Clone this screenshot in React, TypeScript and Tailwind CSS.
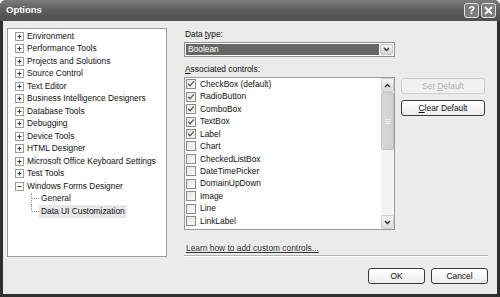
import React from "react";

const treeItems = [
  "Environment",
  "Performance Tools",
  "Projects and Solutions",
  "Source Control",
  "Text Editor",
  "Business Intelligence Designers",
  "Database Tools",
  "Debugging",
  "Device Tools",
  "HTML Designer",
  "Microsoft Office Keyboard Settings",
  "Test Tools",
];

const controls: [string, boolean][] = [
  ["CheckBox (default)", true],
  ["RadioButton", true],
  ["ComboBox", true],
  ["TextBox", true],
  ["Label", true],
  ["Chart", false],
  ["CheckedListBox", false],
  ["DateTimePicker", false],
  ["DomainUpDown", false],
  ["Image", false],
  ["Line", false],
  ["LinkLabel", false],
];

// Expand / collapse box
const ToggleBox = ({ open }: { open?: boolean }) => (
  <svg width="9" height="9" viewBox="0 0 9 9" className="shrink-0">
    <rect x="0.5" y="0.5" width="8" height="8" fill="#fff" stroke="#9c9c9c" />
    <path d="M2.5 4.5h4" stroke="#333" />
    {!open && <path d="M4.5 2.5v4" stroke="#333" />}
  </svg>
);

const Check = ({ on }: { on: boolean }) => (
  <span className="w-[10px] h-[10px] shrink-0 border border-[#8a8a8a] bg-gradient-to-br from-[#e6e6e6] to-[#fafafa] flex items-center justify-center">
    {on && (
      <svg width="8" height="8" viewBox="0 0 8 8">
        <path d="M1.2 3.8l1.9 2 3.7-4.4" fill="none" stroke="#555" strokeWidth="1.3" />
      </svg>
    )}
  </span>
);

const Chevron = ({ up }: { up?: boolean }) => (
  <svg width="7" height="5" viewBox="0 0 7 5">
    <path d={up ? "M1 4l2.5-2.5L6 4" : "M1 1l2.5 2.5L6 1"} fill="none" stroke="#333" strokeWidth="1.4" />
  </svg>
);

export default function App() {
  return (
    <div
      className="w-[500px] h-[297px] bg-[#2f2f2f] rounded-t-[6px] flex flex-col overflow-hidden text-[8.4px] text-[#111]"
      style={{ fontFamily: '"Liberation Sans", Arial, sans-serif' }}
    >
      {/* Title bar */}
      <div className="h-[21px] shrink-0 bg-gradient-to-b from-[#7c7c7c] via-[#5c5c5c] to-[#505050] flex items-center px-[6px]">
        <span className="text-white font-bold text-[9.5px]">Options</span>
        <div className="ml-auto flex gap-[2px] mr-[-2px]">
          <div className="w-[15px] h-[15px] rounded-[3px] border border-[#e0e0e0] bg-[#7c7c7c] flex items-center justify-center text-white font-bold text-[11px] leading-none">
            ?
          </div>
          <div className="w-[15px] h-[15px] rounded-[3px] border border-[#e0e0e0] bg-[#7c7c7c] flex items-center justify-center">
            <svg width="9" height="9" viewBox="0 0 9 9">
              <path d="M1 1l7 7M8 1l-7 7" stroke="#fff" strokeWidth="1.8" />
            </svg>
          </div>
        </div>
      </div>

      {/* Body */}
      <div className="flex-1 mx-[3px] mb-[3px] bg-[#ebebeb] flex flex-col pt-[7px] pl-[4px] pr-[9px]">
        <div className="flex h-[230px]">
          {/* Tree */}
          <div className="w-[160px] h-[229px] shrink-0 bg-white border border-[#9a9a9a] pt-[1px]">
            {treeItems.map((t) => (
              <div key={t} className="h-[12.5px] flex items-center pl-[7px] gap-[3px]">
                <ToggleBox />
                <span className="whitespace-nowrap">{t}</span>
              </div>
            ))}
            <div className="h-[12.5px] flex items-center pl-[7px] gap-[3px]">
              <ToggleBox open />
              <span className="whitespace-nowrap">Windows Forms Designer</span>
            </div>
            <div className="h-[12.5px] flex items-center pl-[24px]">
              <span className="w-[1px] h-full self-start border-l border-dotted border-[#999] ml-[-1px]" />
              <span className="w-[7px] border-t border-dotted border-[#999]" />
              <span className="pl-[2px] whitespace-nowrap">General</span>
            </div>
            <div className="h-[12.5px] flex items-center pl-[24px]">
              <span className="w-[1px] h-[6px] self-start border-l border-dotted border-[#999] ml-[-1px]" />
              <span className="w-[7px] border-t border-dotted border-[#999]" />
              <span className="px-[2px] bg-[#e6e6e6] whitespace-nowrap">Data UI Customization</span>
            </div>
          </div>

          {/* Right column */}
          <div className="flex-1 ml-[17px] flex flex-col">
            <div className="h-[12px] flex items-center pl-[1px]">
              Data <span className="underline ml-[2px]">t</span>ype:
            </div>
            <div className="mt-[2px] h-[15px] w-[211px] border border-[#8f8f8f] bg-white flex items-stretch p-[1px]">
              <div className="flex-1 bg-[#666] text-white flex items-center pl-[2px]">Boolean</div>
              <div className="w-[13px] ml-[1px] bg-gradient-to-b from-[#f4f4f4] to-[#d4d4d4] border border-[#c4c4c4] rounded-[2px] flex items-center justify-center">
                <Chevron />
              </div>
            </div>
            <div className="mt-[6px] h-[12px] flex items-center pl-[1px]">
              <span className="underline">A</span>ssociated controls:
            </div>
            <div className="mt-[2px] flex h-[153px]">
              <div className="w-[211px] h-[153px] border border-[#9a9a9a] bg-white flex">
                <div className="flex-1">
                  {controls.map(([name, on]) => (
                    <div key={name} className="h-[12.45px] flex items-center pl-[1px] gap-[4px]">
                      <Check on={on} />
                      <span className="whitespace-nowrap">{name}</span>
                    </div>
                  ))}
                </div>
                <div className="w-[13px] flex flex-col bg-[#f3f3f3]">
                  <div className="h-[14px] bg-gradient-to-b from-[#f6f6f6] to-[#dcdcdc] border border-[#d0d0d0] rounded-[2px] flex items-center justify-center">
                    <Chevron up />
                  </div>
                  <div className="h-[58px] bg-gradient-to-r from-[#d8d8d8] to-[#cfcfcf] border border-[#c4c4c4] rounded-[2px] flex flex-col items-center justify-center gap-[1px]">
                    <span className="w-[6px] border-t border-[#eee]" />
                    <span className="w-[6px] border-t border-[#eee]" />
                    <span className="w-[6px] border-t border-[#eee]" />
                  </div>
                  <div className="flex-1" />
                  <div className="h-[14px] bg-gradient-to-b from-[#f6f6f6] to-[#dcdcdc] border border-[#d0d0d0] rounded-[2px] flex items-center justify-center">
                    <Chevron />
                  </div>
                </div>
              </div>
              <div className="ml-[6px] flex flex-col gap-[6px] pt-[1px]">
                <div className="w-[84px] h-[16px] rounded-[3px] border border-[#cfcfcf] bg-[#f1f1f1] text-[#b0b0b0] flex items-center justify-center">
                  Set&nbsp;<span className="underline">D</span>efault
                </div>
                <div className="w-[84px] h-[16px] rounded-[3px] border border-[#3a3a3a] bg-gradient-to-b from-white to-[#ececec] flex items-center justify-center">
                  <span className="underline">C</span>lear Default
                </div>
              </div>
            </div>
            <div className="mt-[12px] h-[12px] flex items-center pl-[2px]">
              <span className="underline text-[#333]">Learn how to add custom controls...</span>
            </div>
            <div className="mt-[1px] border-t border-[#b4b4b4] border-b border-b-white" />
          </div>
        </div>

        {/* Footer buttons */}
        <div className="mt-[10px] flex justify-end gap-[6px]">
          <div className="w-[57px] h-[16px] rounded-[3px] border border-[#3a3a3a] bg-gradient-to-b from-white to-[#ececec] flex items-center justify-center">
            OK
          </div>
          <div className="w-[57px] h-[16px] rounded-[3px] border border-[#3a3a3a] bg-gradient-to-b from-white to-[#ececec] flex items-center justify-center">
            Cancel
          </div>
        </div>
      </div>
    </div>
  );
}
